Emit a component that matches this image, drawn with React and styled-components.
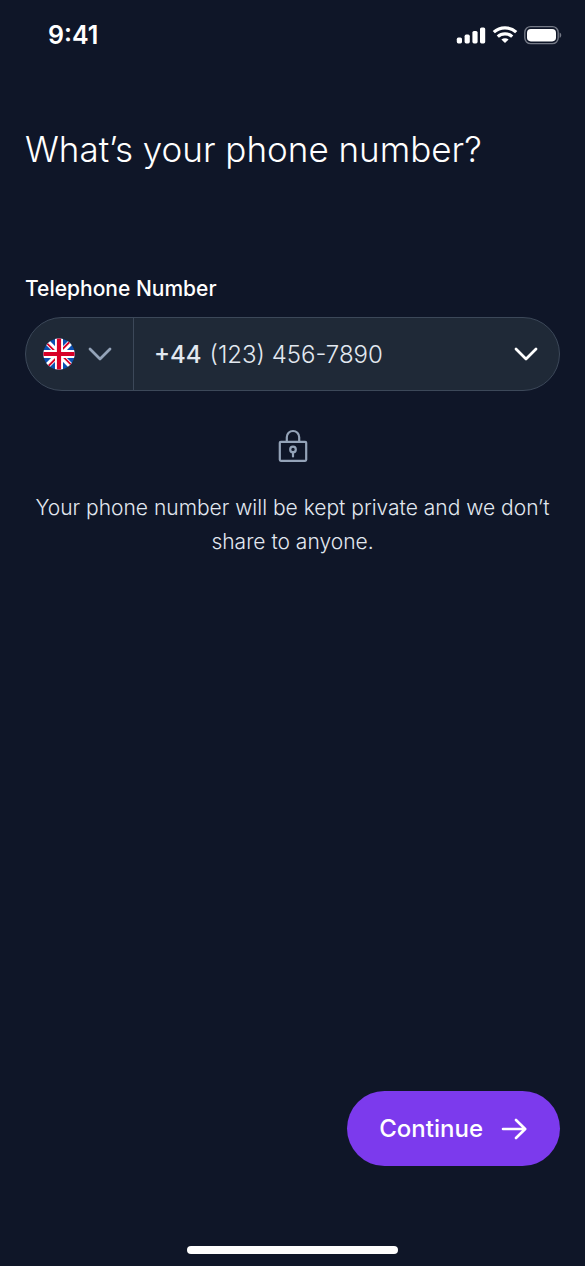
import React from "react";
import styled, { createGlobalStyle } from "styled-components";

export default function App() {
  return (
    <>
      <GlobalStyle />
      <Screen>
        <StatusBar>
          <Time>9:41</Time>
          <StatusIcons>
            <SignalIcon />
            <WifiIcon />
            <BatteryIcon />
          </StatusIcons>
        </StatusBar>
        <Form onSubmit={(e) => e.preventDefault()}>
          <Title>What’s your phone number?</Title>
          <Label htmlFor="phone">Telephone Number</Label>
          <Field>
            <CountryButton type="button" aria-label="Country" aria-haspopup="listbox">
              <FlagIcon />
              <ChevronIcon />
            </CountryButton>
            <DialCode>+44</DialCode>
            <NumberInput id="phone" type="tel" defaultValue="(123) 456-7890" />
            <MoreButton type="button" aria-label="Saved numbers" aria-haspopup="listbox">
              <ChevronIcon />
            </MoreButton>
          </Field>
          <Privacy>
            <LockIcon />
            <PrivacyText>
              Your phone number will be kept private and we don’t share to anyone.
            </PrivacyText>
          </Privacy>
          <ContinueButton type="submit">
            Continue
            <ArrowIcon />
          </ContinueButton>
        </Form>
        <HomeIndicator />
      </Screen>
    </>
  );
}

function SignalIcon() {
  return (
    <svg width="30" height="18" viewBox="0 0 30 18" fill="#fff" aria-hidden="true">
      <rect x="0.8" y="11.6" width="5.2" height="5.8" rx="1.6" />
      <rect x="8.6" y="8.6" width="5.2" height="8.8" rx="1.6" />
      <rect x="16.4" y="5" width="5.2" height="12.4" rx="1.6" />
      <rect x="24" y="1.4" width="5.2" height="16" rx="1.6" />
    </svg>
  );
}

function WifiIcon() {
  return (
    <svg width="26" height="18" viewBox="0 0 26 18" fill="none" stroke="#fff" strokeWidth="3.2" aria-hidden="true">
      <path d="M1.8 6.2C8 .3 18 .3 24.2 6.2" />
      <path d="M5.8 10.6c4-3.7 10.4-3.7 14.4 0" />
      <path d="M9.4 13.6c2.2-1.8 5-1.8 7.2 0L13 17z" fill="#fff" stroke="none" />
    </svg>
  );
}

function BatteryIcon() {
  return (
    <svg width="38" height="20" viewBox="0 0 38 20" fill="none" aria-hidden="true">
      <rect x="0.8" y="1.6" width="33.4" height="17" rx="5.8" stroke="#747986" strokeWidth="1.4" />
      <rect x="3" y="4" width="29" height="12.4" rx="3.8" fill="#fff" />
      <path d="M35.6 7.4c2.2.9 2.200 4.500 0 5.400z" fill="#747986" />
    </svg>
  );
}

function FlagIcon() {
  return (
    <svg width="32" height="32" viewBox="0 0 32 32" aria-hidden="true">
      <clipPath id="flag-circle">
        <circle cx="16" cy="16" r="15.6" />
      </clipPath>
      <g clipPath="url(#flag-circle)">
        <path fill="#0b4fb0" d="M0 0h32v32H0z" />
        <path stroke="#fff" strokeWidth="5.4" d="M3 3l26 26M29 3L3 29" />
        <path stroke="#d80027" strokeWidth="1.8" d="M3 4.4l12 12M29 27.6l-12-12M27.6 3l-12 12M4.4 29l12-12" />
        <path stroke="#fff" strokeWidth="8" d="M16 0v32M0 16h32" />
        <path stroke="#d80027" strokeWidth="4.2" d="M16 0v32M0 16h32" />
      </g>
    </svg>
  );
}

function ChevronIcon() {
  return (
    <svg width="24" height="14" viewBox="0 0 24 14" fill="none" stroke="currentColor" strokeWidth="2.8" strokeLinecap="round" strokeLinejoin="round" aria-hidden="true">
      <path d="M2 2l10 10L22 2" />
    </svg>
  );
}

function LockIcon() {
  return (
    <svg width="30" height="34" viewBox="0 0 30 34" fill="none" stroke="#94a3b8" strokeWidth="2.2" strokeLinejoin="round" strokeLinecap="round" aria-hidden="true">
      <rect x="1.8" y="12.8" width="26.4" height="19" rx="1" />
      <path d="M8.8 12.8V8.2a6.200 6.200 0 0 1 12.400 0v4.600" />
      <circle cx="15" cy="20.4" r="2.8" />
      <path d="M15 23.200v4.200" />
    </svg>
  );
}

function ArrowIcon() {
  return (
    <svg width="26" height="22" viewBox="0 0 26 22" fill="none" stroke="currentColor" strokeWidth="2.6" strokeLinecap="round" strokeLinejoin="round" aria-hidden="true">
      <path d="M2 11h22M15 2l9.2 9L15 20" />
    </svg>
  );
}

const GlobalStyle = createGlobalStyle`
  * {
    box-sizing: border-box;
  }
  body {
    margin: 0;
    background: #0f1628;
  }
  body, button, input {
    font-family: "Inter", "Liberation Sans", sans-serif;
  }
`;

const Screen = styled.div`
  display: flex;
  flex-direction: column;
  min-height: 100vh;
  color: #ffffff;
`;

const StatusBar = styled.header`
  display: flex;
  align-items: center;
  justify-content: space-between;
  height: 70px;
  padding: 0 23px 0 48px;
`;

const Time = styled.span`
  font-size: 25px;
  font-weight: 600;
`;

const StatusIcons = styled.div`
  display: flex;
  align-items: center;
  gap: 6px;
`;

const Form = styled.form`
  display: flex;
  flex-direction: column;
  flex: 1;
  padding: 55px 25px 72px;
`;

const Title = styled.h1`
  margin: 0 0 102px;
  font-size: 35px;
  font-weight: 300;
  line-height: 48px;
`;

const Label = styled.label`
  margin-bottom: 14px;
  font-size: 21px;
  font-weight: 500;
  line-height: 28px;
`;

const Field = styled.div`
  display: flex;
  align-items: center;
  height: 74px;
  overflow: hidden;
  background: #1f2937;
  border: 1px solid #3c4859;
  border-radius: 37px;
`;

const IconButton = styled.button`
  display: flex;
  align-items: center;
  flex-shrink: 0;
  height: 100%;
  background: none;
  border: 0;
  cursor: pointer;
`;

const CountryButton = styled(IconButton)`
  gap: 13px;
  padding: 0 21px 0 17px;
  color: #94a3b8;
  border-right: 1px solid #3c4859;
`;

const MoreButton = styled(IconButton)`
  padding: 0 21px;
  color: #ffffff;
`;

const DialCode = styled.span`
  padding: 0 8px 0 20px;
  color: #e2e8f0;
  font-size: 24px;
  font-weight: 500;
`;

const NumberInput = styled.input`
  flex: 1;
  min-width: 0;
  padding: 0;
  color: #e2e8f0;
  font-size: 24px;
  font-weight: 300;
  background: none;
  border: 0;
  outline: none;
`;

const Privacy = styled.div`
  display: flex;
  flex-direction: column;
  align-items: center;
  gap: 28px;
  margin-top: 38px;
`;

const PrivacyText = styled.p`
  margin: 0;
  color: #e2e8f0;
  font-size: 21px;
  font-weight: 300;
  line-height: 34px;
  text-align: center;
`;

const ContinueButton = styled.button`
  display: flex;
  align-items: center;
  align-self: flex-end;
  gap: 18px;
  height: 75px;
  margin-top: auto;
  padding: 0 33px 0 32px;
  color: #ffffff;
  font-size: 24px;
  font-weight: 500;
  background: #7c3aed;
  border: 0;
  border-radius: 38px;
  cursor: pointer;
`;

const HomeIndicator = styled.div`
  align-self: center;
  width: 36%;
  height: 8px;
  margin: 8px 0 12px;
  background: #ffffff;
  border-radius: 4px;
`;
